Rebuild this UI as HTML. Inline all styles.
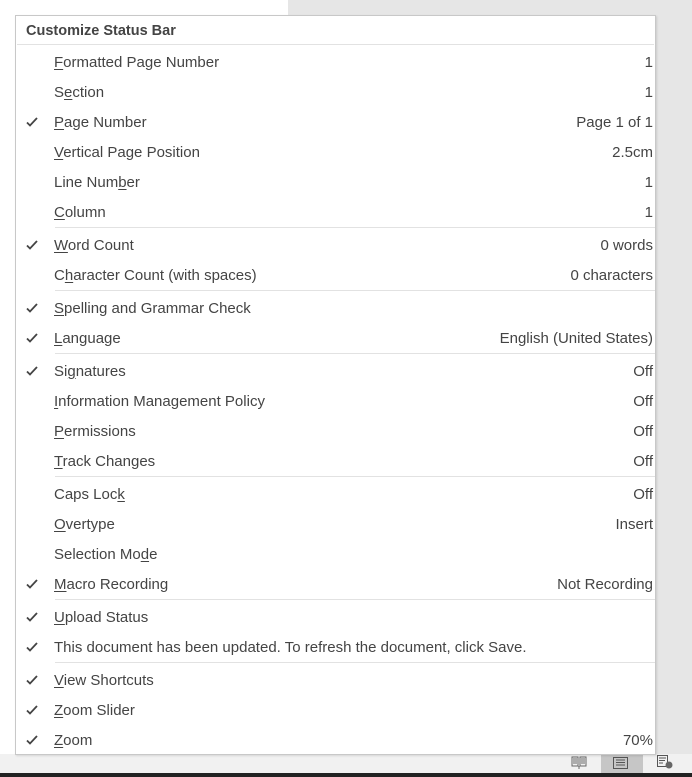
<!DOCTYPE html>
<html><head><meta charset="utf-8"><style>
*{margin:0;padding:0;box-sizing:border-box}
body{width:692px;height:777px;position:relative;overflow:hidden;background:#e6e6e6;font-family:"Liberation Sans",sans-serif;font-size:15px;color:#444}
.doc{position:absolute;left:0;top:0;width:288px;height:760px;background:#fff}
.status{position:absolute;left:0;top:754px;width:692px;height:20px;background:#f1f1f1}
.dark{position:absolute;left:0;top:773px;width:692px;height:4px;background:#222}
.hl{position:absolute;left:601px;top:754px;width:42px;height:19px;background:#c6c6c6}
.menu{position:absolute;left:15px;top:15px;width:641px;height:740px;background:#fff;border:1px solid #c8c8c8;box-shadow:1px 1px 2px rgba(0,0,0,.12)}
.hdr{position:absolute;left:10px;top:7px;font-weight:bold;color:#444;font-size:14.5px}
.hsep{position:absolute;left:1px;right:1px;top:28px;height:1px;background:#e2e2e2}
.r{position:absolute;left:0;width:639px;height:30px;line-height:32px}
.r .t{position:absolute;left:38px}
.r .v{position:absolute;right:2px}
.r svg.c{position:absolute;left:10px;top:10px}
.sep{position:absolute;left:39px;width:600px;height:1px;background:#e2e2e2}
u{text-decoration:underline;text-underline-offset:2px}
</style></head><body>
<svg width="0" height="0" style="position:absolute"><defs><symbol id="ck" viewBox="0 0 12 10"><path d="M1 5.5l3 3L11 1" stroke="#444" stroke-width="1.8" fill="none"/></symbol></defs></svg>
<div class="doc"></div>
<div class="status"></div><div class="hl"></div><div class="dark"></div>
<svg style="position:absolute;left:570px;top:755px" width="20" height="14"><path d="M2 2h6v9H2zM10 2h6v9h-6zM3 4h4M3 6h4M3 8h4M11 4h4M11 6h4M11 8h4M9 11v3" stroke="#666" fill="none"/></svg>
<svg style="position:absolute;left:612px;top:756px" width="18" height="14"><path d="M1.5 1.5h14v11h-14zM4 4h9M4 6.5h9M4 9h9" stroke="#555" fill="none"/></svg>
<svg style="position:absolute;left:656px;top:754px" width="20" height="16"><path d="M1.5 1.5h10v11h-10zM3 4h7M3 6.5h6M3 9h4" stroke="#555" fill="none"/><circle cx="13" cy="11" r="3.5" fill="#666"/></svg>
<div class="menu">
<div class="hdr">Customize Status Bar</div>
<div class="hsep"></div>
<div class="r" style="top:31px"><span class="t"><u>F</u>ormatted Page Number</span><span class="v">1</span></div>
<div class="r" style="top:61px"><span class="t">S<u>e</u>ction</span><span class="v">1</span></div>
<div class="r" style="top:91px"><svg class="c" width="12" height="10"><use href="#ck"/></svg><span class="t"><u>P</u>age Number</span><span class="v">Page 1 of 1</span></div>
<div class="r" style="top:121px"><span class="t"><u>V</u>ertical Page Position</span><span class="v">2.5cm</span></div>
<div class="r" style="top:151px"><span class="t">Line Num<u>b</u>er</span><span class="v">1</span></div>
<div class="r" style="top:181px"><span class="t"><u>C</u>olumn</span><span class="v">1</span></div>
<div class="sep" style="top:211px"></div>
<div class="r" style="top:214px"><svg class="c" width="12" height="10"><use href="#ck"/></svg><span class="t"><u>W</u>ord Count</span><span class="v">0 words</span></div>
<div class="r" style="top:244px"><span class="t">C<u>h</u>aracter Count (with spaces)</span><span class="v">0 characters</span></div>
<div class="sep" style="top:274px"></div>
<div class="r" style="top:277px"><svg class="c" width="12" height="10"><use href="#ck"/></svg><span class="t"><u>S</u>pelling and Grammar Check</span></div>
<div class="r" style="top:307px"><svg class="c" width="12" height="10"><use href="#ck"/></svg><span class="t"><u>L</u>anguage</span><span class="v">English (United States)</span></div>
<div class="sep" style="top:337px"></div>
<div class="r" style="top:340px"><svg class="c" width="12" height="10"><use href="#ck"/></svg><span class="t">Si<u>g</u>natures</span><span class="v">Off</span></div>
<div class="r" style="top:370px"><span class="t"><u>I</u>nformation Management Policy</span><span class="v">Off</span></div>
<div class="r" style="top:400px"><span class="t"><u>P</u>ermissions</span><span class="v">Off</span></div>
<div class="r" style="top:430px"><span class="t"><u>T</u>rack Changes</span><span class="v">Off</span></div>
<div class="sep" style="top:460px"></div>
<div class="r" style="top:463px"><span class="t">Caps Loc<u>k</u></span><span class="v">Off</span></div>
<div class="r" style="top:493px"><span class="t"><u>O</u>vertype</span><span class="v">Insert</span></div>
<div class="r" style="top:523px"><span class="t">Selection Mo<u>d</u>e</span></div>
<div class="r" style="top:553px"><svg class="c" width="12" height="10"><use href="#ck"/></svg><span class="t"><u>M</u>acro Recording</span><span class="v">Not Recording</span></div>
<div class="sep" style="top:583px"></div>
<div class="r" style="top:586px"><svg class="c" width="12" height="10"><use href="#ck"/></svg><span class="t"><u>U</u>pload Status</span></div>
<div class="r" style="top:616px"><svg class="c" width="12" height="10"><use href="#ck"/></svg><span class="t">This document has been updated. To refresh the document, click Save.</span></div>
<div class="sep" style="top:646px"></div>
<div class="r" style="top:649px"><svg class="c" width="12" height="10"><use href="#ck"/></svg><span class="t"><u>V</u>iew Shortcuts</span></div>
<div class="r" style="top:679px"><svg class="c" width="12" height="10"><use href="#ck"/></svg><span class="t"><u>Z</u>oom Slider</span></div>
<div class="r" style="top:709px"><svg class="c" width="12" height="10"><use href="#ck"/></svg><span class="t"><u>Z</u>oom</span><span class="v">70%</span></div>
</div>
</body></html>
